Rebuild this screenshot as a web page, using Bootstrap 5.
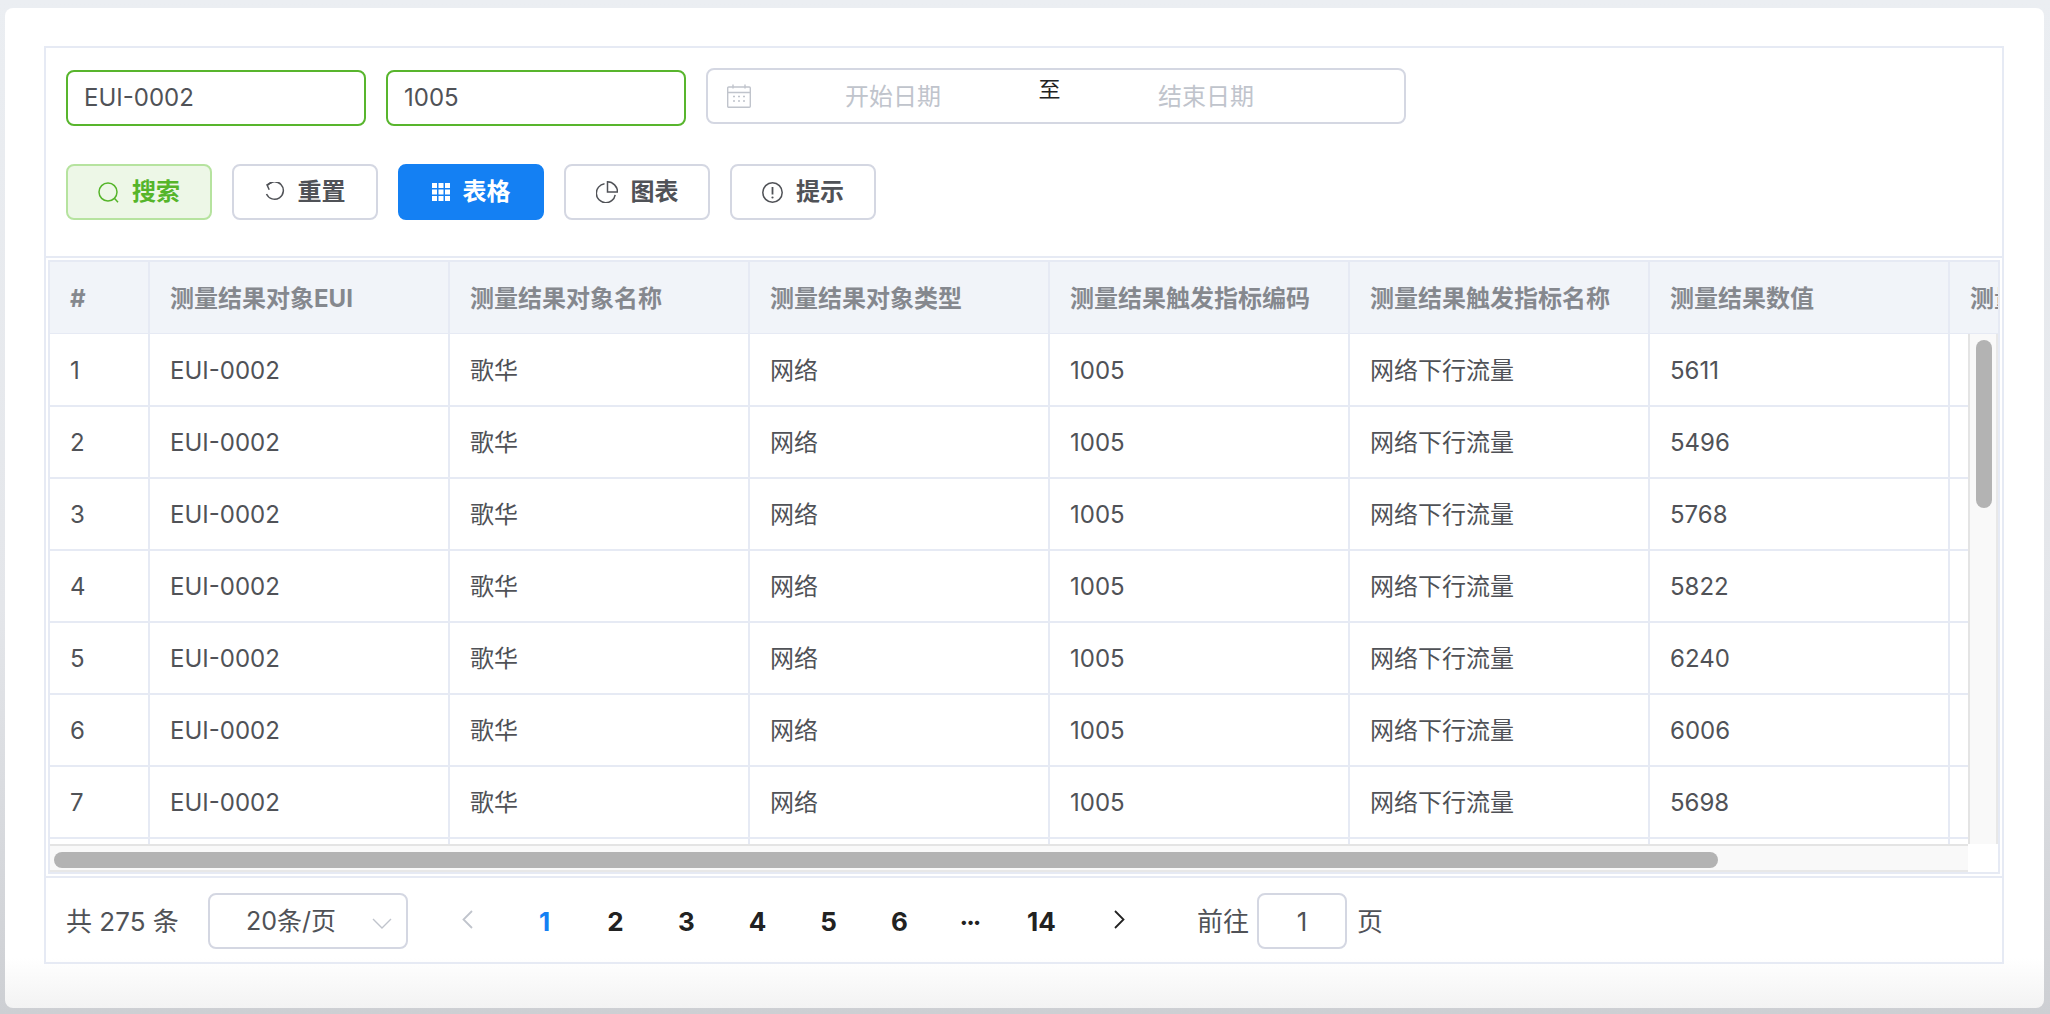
<!DOCTYPE html>
<html lang="zh">
<head>
<meta charset="utf-8">
<title>测量结果</title>
<link href="https://cdn.jsdelivr.net/npm/bootstrap@5.3.0/dist/css/bootstrap.min.css" rel="stylesheet">
<style>
html,body{height:100%}
body{margin:0;overflow:hidden;background:linear-gradient(180deg,#ebeef2 0%,#e4e6ea 60%,#cdcfd3 100%);font-family:Inter,"Noto Sans CJK SC",sans-serif;font-size:24px;color:#505257;padding:8px 6px 6px 5px}
.sheet{height:1000px;background:linear-gradient(180deg,#fff 0,#fff 950px,#f3f3f3 1000px);border-radius:8px;padding:38px 40px 0 39px}
.frame{height:918px;border:2px solid #e6eaf4}
.filters{height:210px;padding:20px 20px 0 20px;border-bottom:2px solid #e6eaf4}
.text-box.form-control{width:300px;height:56px;margin-top:2px;border:2px solid #58b52d;border-radius:8px;padding:0 16px 1px;font-size:24px;color:#505257;box-shadow:none;font-family:inherit}
.range-box{width:700px;height:56px;border:2px solid #d4d7e2;border-radius:8px;padding-left:19px}
.range-box svg{flex:none}
.range-box .form-control{width:260px;border:0;padding:2px 0 0;font-size:24px;text-align:center;background:transparent;box-shadow:none;color:#505257}
.range-box .form-control::placeholder{color:#c0c4cc;opacity:1}
.range-start.form-control{margin-left:12px}
.range-sep{width:53px;text-align:center;color:#222;font-size:22px;line-height:1;margin-top:-15px;flex:none}
.tools{margin-top:38px;gap:20px}
.tool-btn.btn{width:146px;height:56px;border:2px solid #d4d7e2;border-radius:8px;background:#fff;color:#505257;font-size:24px;font-weight:700;padding:0;display:flex;align-items:center;justify-content:center;gap:13px;line-height:1}
.tool-btn svg{flex:none}
.tool-btn.is-green.btn{background:#edf7e7;border-color:#b6e39f;color:#55b52a}
.tool-btn.is-blue.btn{background:#1480f3;border-color:#1480f3;color:#fff}
.grid-box{height:614px;margin:2px 0 2px 2px;width:1952px;border:2px solid #e6eaf4;overflow:hidden}
.head-wrap{height:72px;overflow:hidden;background:#f1f4f9}
.body-row{height:510px}
.body-wrap{width:1918px;height:510px;overflow:hidden;flex:none}
.data-table.table{table-layout:fixed;width:2199px;margin:0;font-size:24px;color:#505257;--bs-table-bg:transparent;--bs-table-color:#505257}
.data-table col.c-num{width:99px}
.data-table col.c-std{width:300px}
.data-table th,.data-table td{height:72px;padding:2px 0 0 20px;vertical-align:middle;border-width:0 2px 2px 0;border-style:solid;border-color:#e6eaf4;white-space:nowrap;overflow:hidden;box-shadow:none;background:transparent}
.data-table th{color:#85888e;font-weight:700}
.v-track{width:30px;height:510px;background:#f9f9f9;border-left:2px solid #e4e4e4;border-right:2px solid #e8e8e8;padding:6px 0 0 6px;flex:none}
.v-thumb{width:16px;height:168px;border-radius:8px;background:#b3b3b3}
.h-row{height:28px}
.h-track{width:1918px;height:28px;background:#f9f9f9;border-top:2px solid #e4e4e4;border-bottom:2px solid #e8e8e8;padding:6px 0 0 4px;flex:none}
.h-thumb{width:1664px;height:16px;border-radius:8px;background:#b3b3b3}
.pager-bar{height:84px;padding:1px 0 0 20px;font-size:26px}
.foot-rule{height:2px;background:#e6eaf4}
.total-text{width:142px;flex:none;white-space:nowrap;padding-top:2px}
.size-pick{width:200px;height:56px;border:2px solid #d4d7e2;border-radius:8px;position:relative;padding:2px 0 0 36px;flex:none;font-size:25px}
.size-pick svg{position:absolute;right:14px;top:23px}
.pager.pagination{margin:0 0 0 24px;--bs-pagination-border-width:0}
.pager .page-item .page-link{width:71px;height:56px;margin:0;padding:2px 0 0;display:flex;align-items:center;justify-content:center;background:transparent;color:#222;font-size:26px;font-weight:700;border:0;box-shadow:none}
.pager svg{margin-top:-4px}
.pager .page-item.active .page-link{color:#1480f3;background:transparent}
.pager .page-item:first-child{margin-right:6px}
.pager .page-item:last-child{margin-left:7px}
.pager .page-item .page-link.dots{font-size:14px}
.jump-label{margin-left:42px;padding-top:2px}
.jump-box.form-control{width:90px;height:56px;margin:0 10px 0 8px;border:2px solid #d4d7e2;border-radius:8px;text-align:center;padding:2px 0 0;font-size:26px;color:#505257;box-shadow:none}
.jump-tail{padding-top:2px}
</style>
</head>
<body>
<div class="sheet">
  <div class="frame">
    <div class="filters">
      <div class="d-flex align-items-start" style="gap:20px">
        <input class="form-control text-box" value="EUI-0002">
        <input class="form-control text-box" value="1005">
        <div class="range-box d-flex align-items-center">
          <svg width="24" height="24" viewBox="0 0 24 24" fill="none" stroke="#c0c4cc" stroke-width="1.4"><rect x=".7" y="3" width="22.6" height="20.3" rx="1"/><path d="M.7 8.5h22.6M6 .5v4M18 .5v4"/><path d="M6 12.5h2M11 12.5h2M16 12.5h2M6 17h2M11 17h2M16 17h2" stroke-width="1.6"/></svg>
          <input class="form-control range-start" placeholder="开始日期">
          <span class="range-sep">至</span>
          <input class="form-control" placeholder="结束日期">
        </div>
      </div>
      <div class="tools d-flex">
        <button class="btn tool-btn is-green" type="button"><svg width="21" height="21" viewBox="0 0 21 21" fill="none" stroke="#55b52a" stroke-width="1.5"><circle cx="10" cy="10" r="9"/><path d="M16.6 16.6l3.4 3.6"/></svg><span>搜索</span></button>
        <button class="btn tool-btn" type="button"><svg width="20" height="20" viewBox="0 0 20 20" fill="none" stroke="#505257" stroke-width="1.5"><path d="M2.500 3.200A8.800 8.800 0 1 1 1.500 12"/><path d="M7 .4L2 2.800l2.200 5"/></svg><span>重置</span></button>
        <button class="btn tool-btn is-blue" type="button"><svg width="18" height="18" viewBox="0 0 18 18" fill="#fff"><rect width="5" height="5"/><rect x="6.500" width="5" height="5"/><rect x="13" width="5" height="5"/><rect y="6.500" width="5" height="5"/><rect x="6.500" y="6.500" width="5" height="5"/><rect x="13" y="6.500" width="5" height="5"/><rect y="13" width="5" height="5"/><rect x="6.500" y="13" width="5" height="5"/><rect x="13" y="13" width="5" height="5"/></svg><span>表格</span></button>
        <button class="btn tool-btn" type="button"><svg width="22" height="22" viewBox="0 0 22 22" fill="none" stroke="#505257" stroke-width="1.5"><path d="M11.500 .8v10.200h10A10.200 10.200 0 0 0 11.500 .8z"/><path d="M8.500 2.800A9.500 9.500 0 1 0 19.200 13.800"/></svg><span>图表</span></button>
        <button class="btn tool-btn" type="button"><svg width="21" height="21" viewBox="0 0 21 21" fill="none" stroke="#505257" stroke-width="1.5"><circle cx="10.500" cy="10.500" r="9.700"/><path d="M10.500 5v7.500" stroke-width="1.800"/><circle cx="10.500" cy="15.500" r="1.100" fill="#505257" stroke="none"/></svg><span>提示</span></button>
      </div>
    </div>
    <div class="grid-box">
      <div class="head-wrap">
        <table class="table data-table">
          <colgroup><col class="c-num"><col class="c-std"><col class="c-std"><col class="c-std"><col class="c-std"><col class="c-std"><col class="c-std"><col class="c-std"></colgroup>
          <thead><tr><th>#</th><th>测量结果对象EUI</th><th>测量结果对象名称</th><th>测量结果对象类型</th><th>测量结果触发指标编码</th><th>测量结果触发指标名称</th><th>测量结果数值</th><th>测量结果时间</th></tr></thead>
        </table>
      </div>
      <div class="body-row d-flex">
        <div class="body-wrap">
          <table class="table data-table" id="rows">
            <colgroup><col class="c-num"><col class="c-std"><col class="c-std"><col class="c-std"><col class="c-std"><col class="c-std"><col class="c-std"><col class="c-std"></colgroup>
            <tbody>
              <tr><td>1</td><td>EUI-0002</td><td>歌华</td><td>网络</td><td>1005</td><td>网络下行流量</td><td>5611</td><td></td></tr>
              <tr><td>2</td><td>EUI-0002</td><td>歌华</td><td>网络</td><td>1005</td><td>网络下行流量</td><td>5496</td><td></td></tr>
              <tr><td>3</td><td>EUI-0002</td><td>歌华</td><td>网络</td><td>1005</td><td>网络下行流量</td><td>5768</td><td></td></tr>
              <tr><td>4</td><td>EUI-0002</td><td>歌华</td><td>网络</td><td>1005</td><td>网络下行流量</td><td>5822</td><td></td></tr>
              <tr><td>5</td><td>EUI-0002</td><td>歌华</td><td>网络</td><td>1005</td><td>网络下行流量</td><td>6240</td><td></td></tr>
              <tr><td>6</td><td>EUI-0002</td><td>歌华</td><td>网络</td><td>1005</td><td>网络下行流量</td><td>6006</td><td></td></tr>
              <tr><td>7</td><td>EUI-0002</td><td>歌华</td><td>网络</td><td>1005</td><td>网络下行流量</td><td>5698</td><td></td></tr>
              <tr><td></td><td></td><td></td><td></td><td></td><td></td><td></td><td></td></tr>
            </tbody>
          </table>
        </div>
        <div class="v-track"><div class="v-thumb"></div></div>
      </div>
      <div class="h-row d-flex">
        <div class="h-track"><div class="h-thumb"></div></div>
      </div>
    </div>
    <div class="foot-rule"></div>
    <div class="pager-bar d-flex align-items-center">
      <span class="total-text">共 275 条</span>
      <div class="size-pick d-flex align-items-center">20条/页<svg width="20" height="11" viewBox="0 0 20 11" fill="none" stroke="#c0c4cc" stroke-width="1.4"><path d="M1 1l9 9 9-9"/></svg></div>
      <ul class="pagination pager">
        <li class="page-item"><a class="page-link" href="#"><svg width="11" height="19" viewBox="0 0 11 19" fill="none" stroke="#c0c4cc" stroke-width="1.8"><path d="M10 1L1.500 9.500 10 18"/></svg></a></li>
        <li class="page-item active"><a class="page-link" href="#">1</a></li>
        <li class="page-item"><a class="page-link" href="#">2</a></li>
        <li class="page-item"><a class="page-link" href="#">3</a></li>
        <li class="page-item"><a class="page-link" href="#">4</a></li>
        <li class="page-item"><a class="page-link" href="#">5</a></li>
        <li class="page-item"><a class="page-link" href="#">6</a></li>
        <li class="page-item"><a class="page-link dots" href="#">•••</a></li>
        <li class="page-item"><a class="page-link" href="#">14</a></li>
        <li class="page-item"><a class="page-link" href="#"><svg width="11" height="19" viewBox="0 0 11 19" fill="none" stroke="#222" stroke-width="1.8"><path d="M1 1l8.500 8.500L1 18"/></svg></a></li>
      </ul>
      <span class="jump-label">前往</span>
      <input class="form-control jump-box" value="1">
      <span class="jump-tail">页</span>
    </div>
  </div>
</div>
<script src="https://cdn.jsdelivr.net/npm/bootstrap@5.3.0/dist/js/bootstrap.bundle.min.js"></script>
</body>
</html>
